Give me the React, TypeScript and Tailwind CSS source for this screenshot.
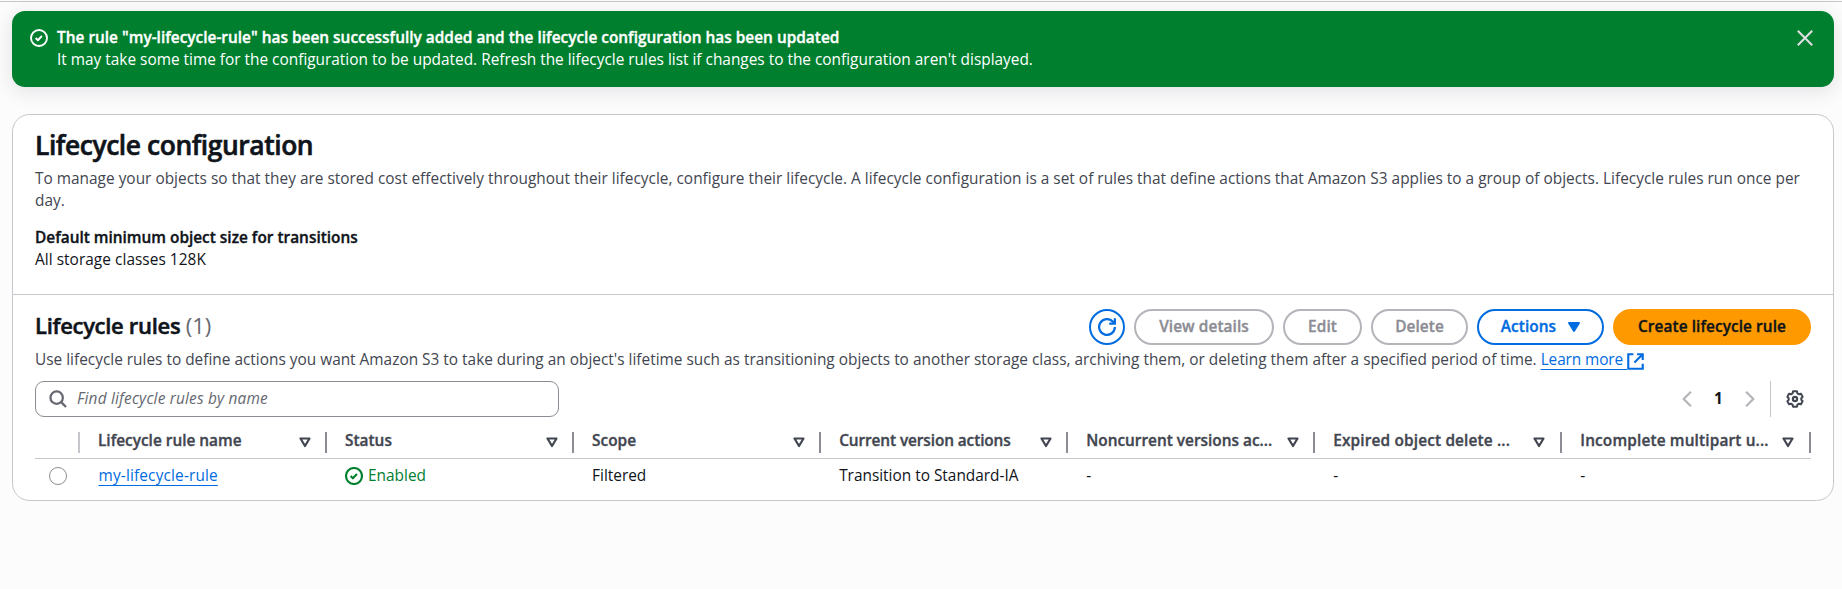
import type { ReactNode } from "react";

function Icon({ className = "", size = 18, children }: { className?: string; size?: number; children: ReactNode }) {
  return (
    <svg
      viewBox="0 0 16 16"
      width={size}
      height={size}
      fill="none"
      stroke="currentColor"
      strokeWidth="2"
      strokeLinejoin="round"
      className={"shrink-0 " + className}
    >
      {children}
    </svg>
  );
}

function SuccessIcon({ className, thin }: { className?: string; thin?: boolean }) {
  return (
    <Icon className={className}>
      <circle cx="8" cy="8" r="7.1" strokeWidth={thin ? 1.7 : 1.9} />
      <path d="m5 8 2 2 3.6-3.8" strokeWidth={thin ? 1.7 : 1.9} />
    </Icon>
  );
}

const bold = "font-semibold [-webkit-text-stroke:0.35px]";
const buttonBase =
  "flex h-9 items-center justify-center rounded-full border-2 text-[15.4px] font-semibold tracking-[0.07px] [-webkit-text-stroke:0.35px]";
const disabledButton = buttonBase + " border-[#b4b4bb] text-[#8c8c94]";

const columns = [
  { name: "Lifecycle rule name", pad: "pr-[14.5px]", text: "" },
  { name: "Status", pad: "pr-[14.5px]", text: "" },
  { name: "Scope", pad: "pr-[14.5px]", text: "" },
  { name: "Current version actions", pad: "pr-[14.5px]", text: "tracking-[-0.1px]" },
  { name: "Noncurrent versions ac...", pad: "pr-[14.5px]", text: "" },
  { name: "Expired object delete ...", pad: "pr-[15.5px]", text: "tracking-[0.15px]" },
  { name: "Incomplete multipart u...", pad: "pr-[15.5px]", text: "tracking-[0.15px]" },
];

const grid = "grid grid-cols-[45px_repeat(6,247.05px)_1fr]";

export default function App() {
  return (
    <div className="h-[589px] w-[1842px] overflow-hidden bg-[#fcfcfd] font-['Open_Sans','Noto_Sans',sans-serif] text-[15.4px] leading-[22px] text-[#0f141a]">
      <div className="mt-px h-px bg-[#c6c6cd]" />

      <div className="ml-3 mr-2 mt-[9px] flex h-[76px] rounded-[13px] bg-[#00802f] pl-[18px] pr-[20px] pt-[16px] text-white shadow-[0_4px_20px_1px_rgba(0,7,22,0.10)]">
        <SuccessIcon thin className="mt-[2px]" />
        <div className="ml-[9px] flex-1">
          <div className={bold + " tracking-[0.01px]"}>
            The rule "my-lifecycle-rule" has been successfully added and the lifecycle configuration has been updated
          </div>
          <div>
            It may take some time for the configuration to be updated. Refresh the lifecycle rules list if changes to the
            configuration aren't displayed.
          </div>
        </div>
        <Icon className="mt-[2px] text-[#dedee3]">
          <path d="m1.6 1.6 12.8 12.8M14.4 1.6 1.6 14.4" strokeWidth="1.8" />
        </Icon>
      </div>

      <main className="ml-3 mr-2 mt-[27px] h-[387px] overflow-hidden rounded-[17.6px] border border-[#c6c6cd] bg-white">
        <section className="h-[180px] border-b border-[#c6c6cd] px-[22px] pt-[14px]">
          <h1 className="text-[26.4px] font-semibold leading-[33px] tracking-[-0.42px] [-webkit-text-stroke:0.6px]">
            Lifecycle configuration
          </h1>
          <p className="mt-[6px] tracking-[0.013px] text-[#424650]">
            To manage your objects so that they are stored cost effectively throughout their lifecycle, configure their
            lifecycle. A lifecycle configuration is a set of rules that define actions that Amazon S3 applies to a group
            of objects. Lifecycle rules run once per day.
          </p>
          <div className={bold + " mt-[15px]"}>Default minimum object size for transitions</div>
          <div className="tracking-[0.05px]">All storage classes 128K</div>
        </section>

        <section className="pl-[22px] pr-[22px] pt-[14px]">
          <div className="flex h-9 items-center justify-between">
            <h2 className="-mt-[4px] text-[22px] font-semibold leading-[26px] tracking-[-0.3px] [-webkit-text-stroke:0.5px]">
              Lifecycle rules{" "}
              <span className="font-normal tracking-normal text-[#656871] [-webkit-text-stroke:0px]">(1)</span>
            </h2>
            <div className="flex gap-[9px]">
              <button aria-label="Refresh" className="flex size-9 items-center justify-center rounded-full border-2 border-[#006ce0] text-[#006ce0]">
                <Icon>
                  <path d="M15 8a7 7 0 1 1-1.9-4.8L14.6 5" />
                  <path d="M10 5h5V0.2" strokeLinejoin="miter" />
                </Icon>
              </button>
              <button className={disabledButton + " w-[140px]"}>View details</button>
              <button className={disabledButton + " w-[79px]"}>Edit</button>
              <button className={disabledButton + " w-[97px]"}>Delete</button>
              <button className={buttonBase + " w-[127px] gap-[12px] border-[#006ce0] text-[#006ce0]"}>
                Actions
                <svg viewBox="0 0 12 10" className="h-[10px] w-[12px]" fill="currentColor">
                  <path d="M.9 0h10.2c.7 0 1.1.8.7 1.400L6.800 9.500a1 1 0 0 1-1.600 0L.2 1.400C-.2.8.2 0 .9 0Z" />
                </svg>
              </button>
              <button className={buttonBase + " w-[198px] border-[#ff9900] bg-[#ff9900]"}>Create lifecycle rule</button>
            </div>
          </div>

          <p className="mt-[4px] flex items-center text-[#424650]">
            <span className="whitespace-pre tracking-[0.004px]">
              Use lifecycle rules to define actions you want Amazon S3 to take during an object's lifetime such as transitioning objects to another storage class, archiving them, or deleting them after a specified period of time.{" "}
            </span>
            <a className="flex items-center text-[#006ce0]">
              <span className="whitespace-pre tracking-[-0.1px] underline decoration-1 underline-offset-[4px]">Learn more </span>
              <Icon size={17} className="mt-[2px]">
                <path d="M6 1.200H1.200V14.800H14.800V10M9.500 1.200h5.300v5.300M14.500 1.500 7 9" strokeLinejoin="miter" />
              </Icon>
            </a>
          </p>

          <div className="mt-[10px] flex h-9 items-center justify-between">
            <div className="flex h-9 w-[524px] items-center rounded-[9px] border border-[#8c8c94] pl-[13px]">
              <Icon size={18} className="text-[#656871]">
                <circle cx="6.800" cy="6.800" r="5.500" />
                <path d="m10.800 10.800 4.300 4.300" />
              </Icon>
              <span className="ml-[10px] italic tracking-[0.19px] text-[#656871]">Find lifecycle rules by name</span>
            </div>
            <div className="flex h-9 items-center">
              <Icon className="text-[#b4b4bb]">
                <path d="M11.500 1.500 5 8l6.500 6.500" />
              </Icon>
              <span className="w-[45px] text-center font-bold">1</span>
              <Icon className="text-[#b4b4bb]">
                <path d="M4.500 1.500 11 8l-6.500 6.500" />
              </Icon>
              <div className="ml-[11px] h-9 w-px bg-[#c6c6cd]" />
              <Icon className="ml-[15px] mr-[7px] text-[#424650]">
                <path
                  d="M6.300 1.100h3.400l.5 1.900 1.400.8 1.700-.5 1.500 2.800-1.200 1.200v1.400l1.200 1.200-1.500 2.800-1.700-.5-1.400.8-.5 1.900H6.300l-.5-1.900-1.400-.8-1.700.5-1.500-2.800 1.200-1.200V7.300L1.200 6.100l1.500-2.800 1.700.5 1.400-.8Z"
                  strokeWidth="1.800"
                />
                <circle cx="8" cy="8" r="1.900" strokeWidth="1.900" />
              </Icon>
            </div>
          </div>

          <div className={grid + " h-[42px] border-b border-[#c6c6cd] pt-[15px] text-[#424650] " + bold}>
            <div className="h-[21px] border-r-2 border-[#c6c6cd]" />
            {columns.map((c) => (
              <div key={c.name} className={"flex h-[21px] items-center justify-between border-r-2 border-[#8c8c94] pl-[18px] " + c.pad}>
                <span className={"-mt-[3px] whitespace-nowrap " + c.text}>{c.name}</span>
                <svg viewBox="0 0 12 11" className="h-[11px] w-[12px]" fill="none" stroke="currentColor" strokeWidth="2.2" strokeLinejoin="round">
                  <path d="M1.500 1.500h9L6 9Z" />
                </svg>
              </div>
            ))}
          </div>
          <div className={grid + " h-[41px] pt-[6px]"}>
            <div className="pl-[14px] pt-[2px]">
              <div className="size-[18px] rounded-full border border-[#8c8c94]" />
            </div>
            <div className="pl-[18.500px]">
              <a className="tracking-[0.16px] text-[#006ce0] underline decoration-1 underline-offset-[4px]">my-lifecycle-rule</a>
            </div>
            <div className="flex pl-[18px] text-[#00802f]">
              <SuccessIcon className="mt-[2px]" />
              <span className="ml-[5px]">Enabled</span>
            </div>
            <div className="pl-[18px]">Filtered</div>
            <div className="pl-[18px]">Transition to Standard-IA</div>
            <div className="pl-[18px]">-</div>
            <div className="pl-[18px]">-</div>
            <div className="pl-[18px]">-</div>
          </div>
        </section>
      </main>
    </div>
  );
}
